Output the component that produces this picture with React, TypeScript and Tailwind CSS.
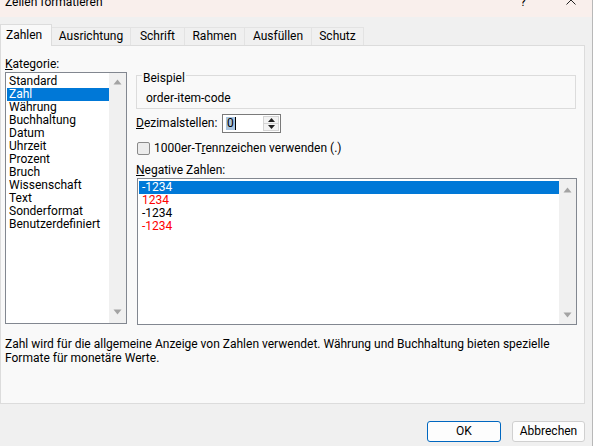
import React from 'react';

const kategorien = [
  'Standard',
  'Zahl',
  'Währung',
  'Buchhaltung',
  'Datum',
  'Uhrzeit',
  'Prozent',
  'Bruch',
  'Wissenschaft',
  'Text',
  'Sonderformat',
  'Benutzerdefiniert',
];

const negativ = [
  { text: '-1234', red: false },
  { text: '1234', red: true },
  { text: '-1234', red: false },
  { text: '-1234', red: true },
];

const tabs = [
  { label: 'Ausrichtung', w: 'w-[79px]' },
  { label: 'Schrift', w: 'w-[54px]' },
  { label: 'Rahmen', w: 'w-[60px]' },
  { label: 'Ausfüllen', w: 'w-[67px]' },
  { label: 'Schutz', w: 'w-[52px]' },
];

function ScrollTrack({ upTop, downBottom }: { upTop: string; downBottom: string }) {
  return (
    <div className="w-[17px] self-stretch bg-[#f0f0f0] flex flex-col items-center justify-between">
      <svg width="9" height="6" viewBox="0 0 9 6" className={upTop}>
        <path d="M0.5 5.5 L4.5 0.5 L8.5 5.5 Z" fill="#a3a3a3" />
      </svg>
      <svg width="9" height="6" viewBox="0 0 9 6" className={downBottom}>
        <path d="M0.5 0.5 L4.5 5.5 L8.5 0.5 Z" fill="#a3a3a3" />
      </svg>
    </div>
  );
}

export default function App() {
  return (
    <div className="w-[594px] h-[446px] flex overflow-hidden bg-white text-[12px] leading-[13px] text-black font-['Roboto',sans-serif]">
      <div className="w-[592px] h-full flex flex-col bg-[#f0f0f0]">
        {/* Title bar, cut off at the top */}
        <div className="h-[17px] overflow-hidden bg-[#f9efec]">
          <div className="-mt-[5px] h-[14px] flex items-center pl-[5px] pr-[16px]">
            <span>Zellen formatieren</span>
            <span className="ml-auto mr-[40px]">?</span>
            <svg width="10" height="10" viewBox="0 0 10 10" className="-mt-[4px]">
              <path d="M0.5 0.5 L9.5 9.5 M9.5 0.5 L0.5 9.5" stroke="#222" strokeWidth="1" />
            </svg>
          </div>
        </div>

        {/* Tabs */}
        <div className="h-[28px] flex items-end">
          <div className="relative z-10 -mb-px h-[22px] w-[52px] pl-[5px] flex items-center bg-[#f9f9f9] border border-b-0 border-[#dcdcdc]">
            Zahlen
          </div>
          {tabs.map((t) => (
            <div
              key={t.label}
              className={
                t.w +
                ' h-[18px] flex items-center justify-center border border-b-0 border-l-0 border-[#e3e3e3] bg-[#f0f0f0]'
              }
            >
              {t.label}
            </div>
          ))}
        </div>

        {/* Panel */}
        <div className="w-[585px] h-[359px] border border-[#dcdcdc] bg-[#f9f9f9] flex flex-col">
          <div className="flex pl-[4px]">
            {/* Kategorie */}
            <div className="flex flex-col w-[122px]">
              <div className="mt-[11px] h-[14px] flex items-center">
                <span><span className="underline">K</span>ategorie:</span>
              </div>
              <div className="mt-[1px] h-[252px] border border-[#828790] bg-white flex">
                <div className="flex-1 pt-[2px] pl-px">
                  {kategorien.map((k) => (
                    <div
                      key={k}
                      className={
                        'h-[13px] flex items-center pl-[2px] ' +
                        (k === 'Zahl' ? 'bg-[#0078d7] text-white' : '')
                      }
                    >
                      {k}
                    </div>
                  ))}
                </div>
                <ScrollTrack upTop="mt-[6px]" downBottom="mb-[8px]" />
              </div>
            </div>

            {/* Right side */}
            <div className="ml-[9px] flex flex-col w-[441px]">
              {/* Beispiel group box */}
              <div className="mt-[29px] h-[34px] w-[440px] border border-[#dcdcdc] flex flex-col">
                <span className="-mt-[5px] ml-[5px] w-fit px-px h-[14px] leading-[14px] bg-[#f9f9f9]">Beispiel</span>
                <div className="mt-[6px] ml-[9px] h-[14px] flex items-center">order-item-code</div>
              </div>

              <div className="mt-[5px] h-[19px] flex items-center">
                <span className="w-[86px]">
                  <span className="underline">D</span>ezimalstellen:
                </span>
                <div className="w-[59px] h-[19px] border border-[#7a7a7a] bg-white flex">
                  <div className="flex-1 flex items-center pl-[3px]">
                    <span className="bg-[#a9c4df] px-px leading-[13px]">0</span>
                    <span className="w-px h-[13px] bg-black" />
                  </div>
                  <div className="w-[16px] my-px mr-px flex flex-col border border-[#d4d4d4]">
                    <div className="flex-1 flex items-center justify-center bg-[#f3f3f3] border-b border-[#d4d4d4]">
                      <svg width="7" height="4" viewBox="0 0 7 4">
                        <path d="M0 4 L3.5 0 L7 4 Z" fill="#202020" />
                      </svg>
                    </div>
                    <div className="flex-1 flex items-center justify-center bg-[#f3f3f3]">
                      <svg width="7" height="4" viewBox="0 0 7 4">
                        <path d="M0 0 L3.5 4 L7 0 Z" fill="#202020" />
                      </svg>
                    </div>
                  </div>
                </div>
              </div>

              <div className="mt-[9px] h-[13px] flex items-center">
                <div className="ml-px w-[13px] h-[13px] rounded-[2px] border border-[#8a8a8a] bg-[#ececec]" />
                <span className="ml-[4px]">
                  1000er-T<span className="underline">r</span>ennzeichen verwenden (.)
                </span>
              </div>

              <div className="mt-[9px] h-[13px] flex items-center">
                <span><span className="underline">N</span>egative Zahlen:</span>
              </div>

              <div className="mt-[1px] ml-px h-[147px] w-[440px] border border-[#828790] bg-white flex">
                <div className="flex-1 pt-[2px] pl-px">
                  {negativ.map((n, i) => (
                    <div
                      key={i}
                      className={
                        'h-[13px] flex items-center pl-[3px] ' +
                        (i === 0 ? 'bg-[#0078d7] text-white' : n.red ? 'text-[#ff0000]' : '')
                      }
                    >
                      {n.text}
                    </div>
                  ))}
                </div>
                <ScrollTrack upTop="mt-[8px]" downBottom="mb-[6px]" />
              </div>
            </div>
          </div>

          <div className="mt-[12px] pl-[4px] leading-[14px] w-[560px]">
            Zahl wird für die allgemeine Anzeige von Zahlen verwendet. Währung und Buchhaltung bieten spezielle
            Formate für monetäre Werte.
          </div>
        </div>

        {/* Buttons */}
        <div className="w-[585px] flex justify-end gap-[11px] mt-[17px]">
          <button className="w-[74px] h-[21px] rounded-[3px] border border-[#0067c0] bg-[#fdfdfd]">OK</button>
          <button className="w-[73px] h-[21px] rounded-[3px] border border-[#d0d0d0] bg-[#fdfdfd]">Abbrechen</button>
        </div>
      </div>
      <div className="w-[2px] h-full border-l border-[#b8b8b8] bg-white" />
    </div>
  );
}
